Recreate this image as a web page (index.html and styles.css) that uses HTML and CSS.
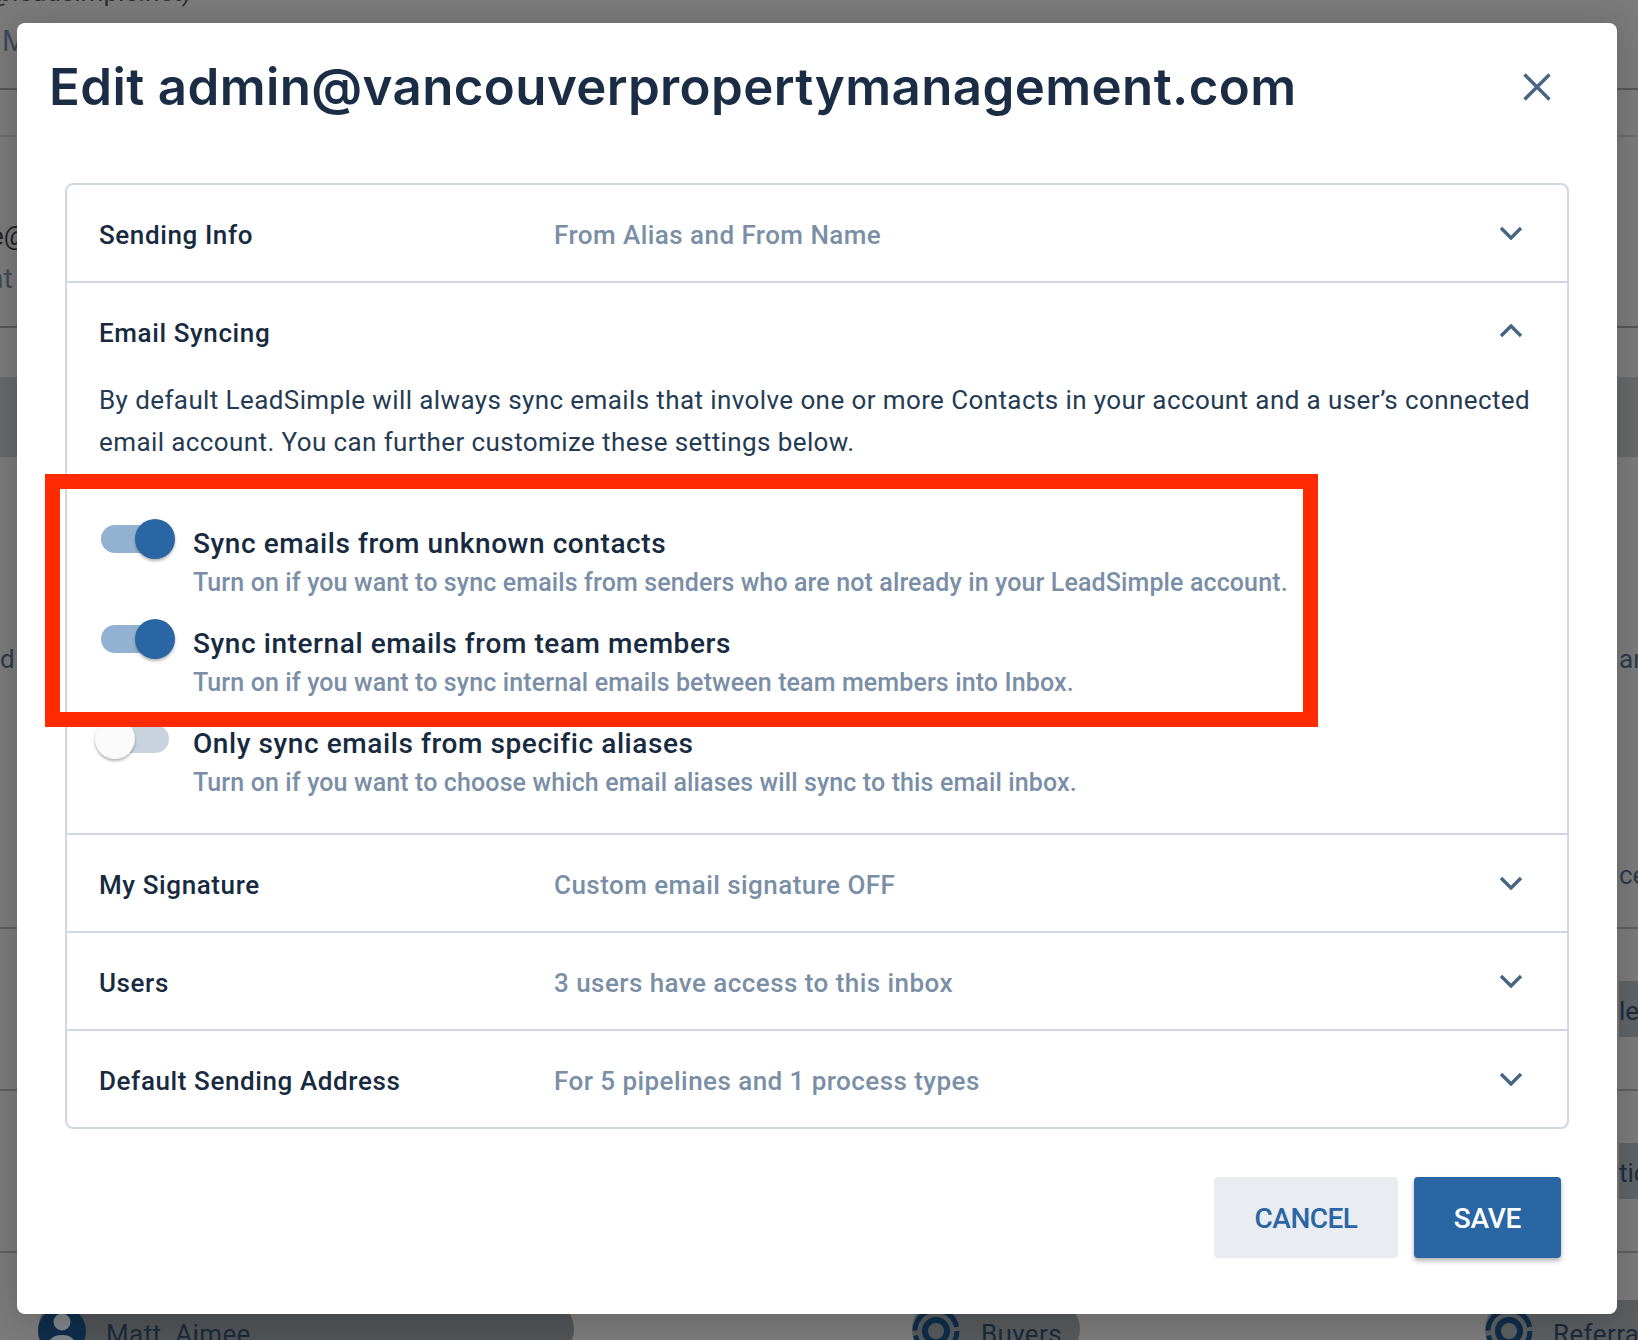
FILE: index.html
```html
<!DOCTYPE html>
<html lang="en">
<head>
<meta charset="utf-8">
<title>Edit admin@vancouverpropertymanagement.com</title>
<link rel="stylesheet" href="styles.css">
</head>
<body>
<div class="backdrop">
  <div class="bg-row bg-top">
    <div class="bg-email">ee@leadsimple.net)</div>
    <div class="bg-tab">M</div>
  </div>
  <div class="bg-row bg-faint"></div>
  <div class="bg-row bg-account">
    <div class="bg-dark">e@</div>
    <div class="bg-soft">nt</div>
  </div>
  <div class="bg-gap"></div>
  <div class="bg-band"></div>
  <div class="bg-row bg-long">
    <div class="bg-split"><span>d s</span><span class="bg-right">an</span></div>
    <div class="bg-split bg-ce"><span></span><span class="bg-right">ce</span></div>
  </div>
  <div class="bg-row bg-item"><div class="bg-pill">le</div></div>
  <div class="bg-row bg-item"><div class="bg-pill">tic</div></div>
  <div class="bg-chips">
    <div class="chip chip-matt">
      <svg class="chip-icon" viewBox="0 0 48 48"><circle cx="24" cy="24" r="24" fill="#0f2c49"/><circle cx="24" cy="15" r="8.5" fill="#7d8487"/><path d="M8 42c2-11 9-14 16-14s14 3 16 14z" fill="#7d8487"/></svg>
      <span>Matt&nbsp; Aimee</span>
    </div>
    <div class="chip chip-buyers">
      <svg class="chip-icon" viewBox="0 0 48 48"><circle cx="24" cy="24" r="21" fill="none" stroke="#0f2c49" stroke-width="5" stroke-dasharray="28 5"/><circle cx="24" cy="24" r="11" fill="none" stroke="#0f2c49" stroke-width="6"/></svg>
      <span>Buyers</span>
    </div>
    <div class="chip chip-ref">
      <svg class="chip-icon" viewBox="0 0 48 48"><circle cx="24" cy="24" r="21" fill="none" stroke="#0f2c49" stroke-width="5" stroke-dasharray="28 5"/><circle cx="24" cy="24" r="11" fill="none" stroke="#0f2c49" stroke-width="6"/></svg>
      <span>Referrals</span>
    </div>
  </div>
</div>

<section class="modal">
  <header class="modal-head">
    <h1>Edit admin@vancouverpropertymanagement.com</h1>
    <svg class="close" viewBox="0 0 28 28"><path d="M1.5 1.5l25 25M26.5 1.5l-25 25"/></svg>
  </header>

  <div class="accordion">
    <div class="acc-head">
      <span class="acc-title">Sending Info</span>
      <span class="acc-sum">From Alias and From Name</span>
      <svg class="chev" viewBox="0 0 24 14"><path d="M2 2l10 10L22 2"/></svg>
    </div>
    <div class="acc-open">
      <div class="acc-head acc-head-open">
        <span class="acc-title">Email Syncing</span>
        <svg class="chev" viewBox="0 0 24 14"><path d="M2 12L12 2l10 10"/></svg>
      </div>
      <p class="acc-text">By default LeadSimple will always sync emails that involve one or more Contacts in your account and a user’s connected email account. You can further customize these settings below.</p>
      <div class="opts">
        <div class="opt">
          <div class="switch on"><i></i></div>
          <div>
            <div class="opt-title">Sync emails from unknown contacts</div>
            <div class="opt-desc">Turn on if you want to sync emails from senders who are not already in your LeadSimple account.</div>
          </div>
        </div>
        <div class="opt">
          <div class="switch on"><i></i></div>
          <div>
            <div class="opt-title">Sync internal emails from team members</div>
            <div class="opt-desc">Turn on if you want to sync internal emails between team members into Inbox.</div>
          </div>
        </div>
        <div class="opt">
          <div class="switch"><i></i></div>
          <div>
            <div class="opt-title">Only sync emails from specific aliases</div>
            <div class="opt-desc">Turn on if you want to choose which email aliases will sync to this email inbox.</div>
          </div>
        </div>
      </div>
    </div>
    <div class="acc-head">
      <span class="acc-title">My Signature</span>
      <span class="acc-sum">Custom email signature OFF</span>
      <svg class="chev" viewBox="0 0 24 14"><path d="M2 2l10 10L22 2"/></svg>
    </div>
    <div class="acc-head">
      <span class="acc-title">Users</span>
      <span class="acc-sum">3 users have access to this inbox</span>
      <svg class="chev" viewBox="0 0 24 14"><path d="M2 2l10 10L22 2"/></svg>
    </div>
    <div class="acc-head acc-last">
      <span class="acc-title">Default Sending Address</span>
      <span class="acc-sum">For 5 pipelines and 1 process types</span>
      <svg class="chev" viewBox="0 0 24 14"><path d="M2 2l10 10L22 2"/></svg>
    </div>
  </div>

  <footer class="modal-foot">
    <button class="btn btn-cancel">CANCEL</button>
    <button class="btn btn-save">SAVE</button>
  </footer>
</section>

<div class="highlight"></div>
</body>
</html>
```
FILE: styles.css
```css
* { box-sizing: border-box; }
html, body { margin: 0; height: 100%; overflow: hidden; }
body {
  width: 1638px;
  height: 1340px;
  font-family: Roboto, "Liberation Sans", sans-serif;
  background: #787878;
  position: relative;
}

/* dimmed page behind the dialog */
.backdrop {
  height: 1340px;
  display: flex;
  flex-direction: column;
  background: #7a7a7a;
  color: #2b3a4a;
  font-size: 26px;
  line-height: 30px;
}
.bg-row { border-bottom: 2px solid #5f5f5f; }
.bg-top { height: 90px; position: relative; overflow: hidden; border-bottom-color: #565656; }
.bg-email { margin-top: -23px; margin-left: -39px; color: #2e2e2e; height: 30px; white-space: nowrap; }
.bg-tab { margin-top: 19px; margin-left: 2px; color: #3a4a5b; font-size: 29px; }
.bg-faint { height: 47px; border-bottom-color: #6c6c6c; }
.bg-account { height: 191px; padding-top: 84px; border-bottom-color: #575757; }
.bg-dark { color: #222; line-height: 30px; margin-left: -10px; }
.bg-soft { color: #3e4a55; font-size: 28px; margin-top: 13px; margin-left: -12px; }
.bg-gap { height: 49px; }
.bg-band { height: 80px; background: #67686a; }
.bg-long { height: 473px; padding-top: 187px; }
.bg-split { display: flex; justify-content: space-between; color: #2b3a4a; }
.bg-right { width: 19px; overflow: hidden; white-space: nowrap; }
.bg-ce { margin-top: 186px; }
.bg-item { height: 162px; display: flex; justify-content: flex-end; padding-top: 52px; }
.bg-pill {
  width: 19px; height: 56px; background: #5e6367; color: #1c2c40;
  line-height: 60px; overflow: hidden; white-space: nowrap;
}
.bg-chips { display: flex; padding: 47px 0 0 38px; height: 87px; }
.chip {
  display: flex; gap: 20px; height: 58px; align-items: flex-start;
  background: #505356; border-radius: 29px; color: #1a2a3a; white-space: nowrap;
  padding-top: 7px; flex: none; letter-spacing: .4px;
}
.chip span { padding-top: 12px; }
.chip-icon { width: 48px; height: 48px; flex: none; }
.chip-matt { width: 536px; }
.chip-buyers { width: 168px; margin-left: 338px; background: #56595b; gap: 21px; }
.chip-ref { width: 200px; margin-left: 405px; background: #5a5e60; }

/* dialog */
.modal {
  position: absolute; left: 17px; top: 23px;
  width: 1600px; height: 1291px;
  background: #fff; border-radius: 8px;
  box-shadow: 0 4px 30px rgba(0,0,0,.18);
}
.modal-head {
  height: 160px; padding: 34px 66px 0 32px;
  display: flex; justify-content: space-between; align-items: flex-start;
}
h1 {
  margin: 0; font: 600 51px/60px Inter, "Liberation Sans", sans-serif;
  letter-spacing: .38px; color: #1b2d45; white-space: nowrap;
}
.close { width: 28px; height: 28px; margin-top: 16px; fill: none; stroke: #486581; stroke-width: 3.4; }
.accordion {
  width: 1504px; height: 946px; margin-left: 48px;
  border: 2px solid #d0d7e2; border-radius: 8px;
}
.acc-head {
  height: 98px; padding: 4px 44px 0 32px;
  display: flex; align-items: center;
  border-bottom: 2px solid #d0d7e2;
}
.acc-head-open { border-bottom: 0; height: 96px; }
.acc-last { border-bottom: 0; height: 96px; }
.acc-title { width: 455px; font-size: 26px; font-weight: 500; color: #172a40; flex: none; letter-spacing: .6px; }
.acc-sum { font-size: 26px; font-weight: 500; color: #7a8fa6; letter-spacing: .45px; }
.chev {
  width: 24px; height: 14px; margin-left: auto; margin-top: -4px;
  fill: none; stroke: #486581; stroke-width: 3.4;
}
.acc-open { height: 552px; border-bottom: 2px solid #d0d7e2; }
.acc-text {
  margin: 0 0 60px; padding: 0 20px 0 32px;
  font-size: 26px; line-height: 42px; color: #243b53; letter-spacing: .4px;
}
.opts { display: flex; flex-direction: column; gap: 20px; padding-left: 34px; }
.opt { display: flex; height: 80px; }
.switch {
  position: relative; width: 68px; height: 28px; flex: none;
  margin: 2px 24px 0 0; border-radius: 14px; background: #c9d3de;
}
.switch i {
  position: absolute; left: -6px; top: -6px; width: 40px; height: 40px;
  border-radius: 50%; background: #fafafa; box-shadow: 0 2px 3px rgba(0,0,0,.3);
}
.switch.on { background: #93b2d2; }
.switch.on i { left: 34px; background: #2a66a3; }
.opt-title { font-size: 28px; line-height: 41px; height: 40px; font-weight: 500; color: #172a40; white-space: nowrap; letter-spacing: .58px; }
.opt-desc { font-size: 25px; line-height: 40px; font-weight: 500; color: #7a8fa6; white-space: nowrap; letter-spacing: .12px; }
.modal-foot { display: flex; justify-content: flex-end; gap: 16px; padding: 48px 56px 0 0; }
.btn {
  height: 81px; border: 0; border-radius: 4px; padding: 2px 0 0;
  font: 500 28px Roboto, sans-serif;
}
.btn-cancel { width: 184px; background: #e9edf2; color: #2a66a3; letter-spacing: -.5px; }
.btn-save { width: 147px; background: #2a66a3; color: #fff; letter-spacing: -.2px; box-shadow: 0 3px 5px rgba(0,0,0,.3); }

/* annotation */
.highlight {
  position: absolute; left: 45px; top: 474px;
  width: 1273px; height: 253px;
  border: 15px solid #ff2a00;
}
```
